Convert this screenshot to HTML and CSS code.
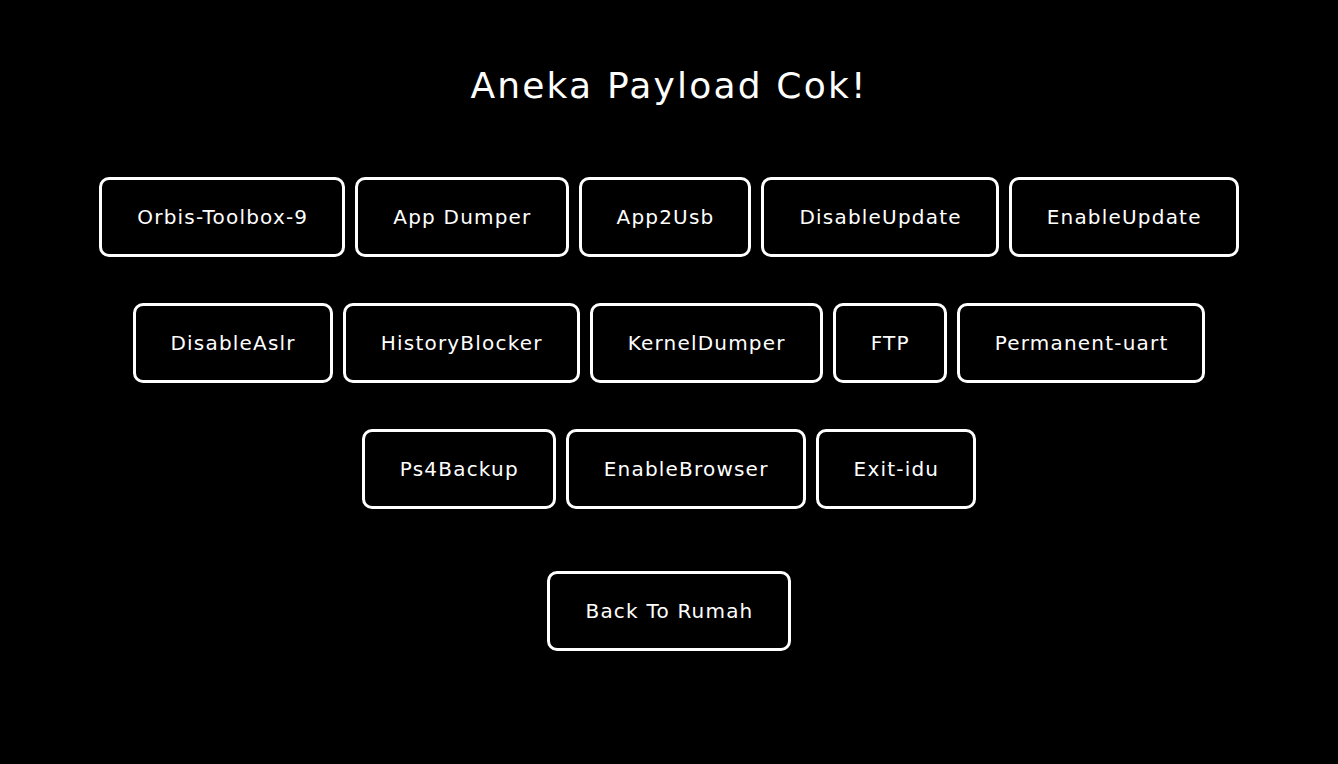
FILE: index.html
```html
<!DOCTYPE html>
<html lang="id">
<head>
<meta charset="utf-8">
<title>Aneka Payload Cok!</title>
<link rel="stylesheet" href="styles.css">
</head>
<body>
<main class="page">
  <h1 class="title">Aneka Payload Cok!</h1>
  <div class="rows">
    <div class="row">
      <button class="btn">Orbis-Toolbox-9</button>
      <button class="btn">App Dumper</button>
      <button class="btn">App2Usb</button>
      <button class="btn">DisableUpdate</button>
      <button class="btn">EnableUpdate</button>
    </div>
    <div class="row">
      <button class="btn">DisableAslr</button>
      <button class="btn">HistoryBlocker</button>
      <button class="btn">KernelDumper</button>
      <button class="btn">FTP</button>
      <button class="btn">Permanent-uart</button>
    </div>
    <div class="row">
      <button class="btn">Ps4Backup</button>
      <button class="btn">EnableBrowser</button>
      <button class="btn">Exit-idu</button>
    </div>
  </div>
  <div class="back-row">
    <button class="btn">Back To Rumah</button>
  </div>
</main>
</body>
</html>
```

FILE: styles.css
```css
html, body {
  margin: 0;
  padding: 0;
  background: #000;
}
body {
  font-family: "DejaVu Sans", "Noto Sans", sans-serif;
  color: #fff;
}
.page {
  display: flex;
  flex-direction: column;
  align-items: center;
  padding-top: 61px;
}
.title {
  margin: 0;
  font-size: 36px;
  font-weight: 400;
  line-height: 50px;
  letter-spacing: 2.2px;
}
.rows {
  margin-top: 66px;
  display: flex;
  flex-direction: column;
  row-gap: 46px;
}
.row {
  display: flex;
  justify-content: center;
  column-gap: 10px;
}
.btn {
  background: #000;
  color: #fff;
  border: 3px solid #fff;
  border-radius: 10px;
  font-family: inherit;
  font-size: 20px;
  font-weight: 400;
  line-height: 30px;
  letter-spacing: 1.2px;
  padding: 22px 34px 22px 35px;
  cursor: pointer;
}
.back-row {
  margin-top: 62px;
  display: flex;
  justify-content: center;
}
```
